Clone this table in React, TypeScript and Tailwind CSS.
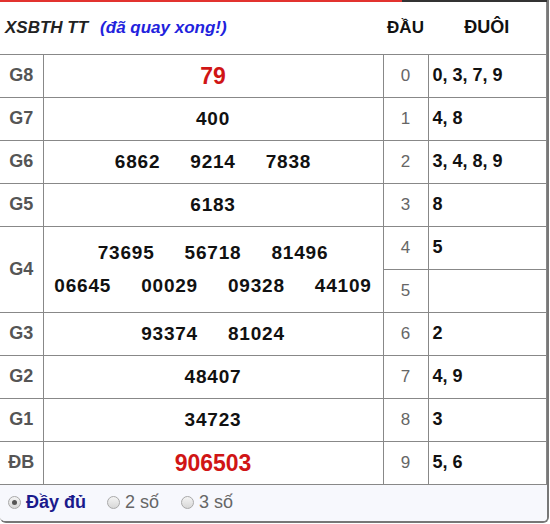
import React from "react"

const dau = ["0", "1", "2", "3", "4", "5", "6", "7", "8", "9"]
const duoi = ["0, 3, 7, 9", "4, 8", "3, 4, 8, 9", "8", "5", "", "2", "4, 9", "3", "5, 6"]

const Radio = ({ on }: { on?: boolean }) => (
  <span className="inline-flex w-[13px] h-[13px] rounded-full border border-[#a9a9a9] bg-gradient-to-b from-[#f4f4f4] to-[#d8d8d8] items-center justify-center mr-[5px]">
    {on && <span className="w-[5px] h-[5px] rounded-full bg-[#555]" />}
  </span>
)

const Nums = ({ items, red }: { items: string[]; red?: boolean }) => (
  <div
    className={`flex justify-center leading-[22px] ${
      red ? "text-[23px] text-[#d01515]" : "text-[19px] tracking-[0.8px] text-[#111] gap-[30px]"
    }`}
  >
    {items.map((n) => (
      <span key={n}>{n}</span>
    ))}
  </div>
)

export default function App() {
  const cellL = "border-b border-[#888] text-center text-[#555] font-bold text-[18px]"
  const cellM = "border-b border-l border-[#888] font-bold"
  const rows: { g: string; items: string[][]; red?: boolean }[] = [
    { g: "G8", items: [["79"]], red: true },
    { g: "G7", items: [["400"]] },
    { g: "G6", items: [["6862", "9214", "7838"]] },
    { g: "G5", items: [["6183"]] },
    { g: "G4", items: [["73695", "56718", "81496"], ["06645", "00029", "09328", "44109"]] },
    { g: "G3", items: [["93374", "81024"]] },
    { g: "G2", items: [["48407"]] },
    { g: "G1", items: [["34723"]] },
    { g: "ĐB", items: [["906503"]], red: true },
  ]

  let di = 0
  const body: React.ReactNode[] = []
  rows.forEach((r) => {
    const span = r.items.length
    for (let k = 0; k < span; k++) {
      const idx = di++
      body.push(
        <tr key={idx} className="h-[43px]">
          {k === 0 && (
            <>
              <td rowSpan={span} className={cellL}>{r.g}</td>
              <td rowSpan={span} className={cellM}>
                <div className="flex flex-col gap-[11px]">
                  {r.items.map((it, j) => (
                    <Nums key={j} items={it} red={r.red} />
                  ))}
                </div>
              </td>
            </>
          )}
          <td className="border-b border-l border-[#888] text-center text-[17px] text-[#666]">{dau[idx]}</td>
          <td className="border-b border-l border-r border-[#888] pl-[4px] text-[18px] font-bold text-[#111]">{duoi[idx]}</td>
        </tr>
      )
    }
  })

  return (
    <div className="w-[550px] h-[524px] bg-white font-['Liberation_Sans',Arial,sans-serif]">
      <div className="w-[549px] border-r-2 border-b-2 border-[#777] rounded-br-[6px] rounded-bl-[6px] overflow-hidden">
        <div className="flex h-[2px]">
          <div className="w-[402px] bg-[#e2322f]" />
          <div className="flex-1 bg-[#333]" />
        </div>
        <table className="w-[546px] table-fixed border-collapse">
          <colgroup>
            <col className="w-[43px]" />
            <col className="w-[340px]" />
            <col className="w-[45px]" />
            <col className="w-[118px]" />
          </colgroup>
          <thead>
            <tr className="h-[52px]">
              <th colSpan={2} className="border-b border-[#888] text-left pl-[5px] font-bold italic text-[17px] text-[#222] whitespace-nowrap">
                XSBTH TT<span className="ml-[12px] text-[#2222dd]">(đã quay xong!)</span>
              </th>
              <th className="border-b border-[#888] text-center font-bold text-[17px] text-[#111]">ĐẦU</th>
              <th className="border-b border-r border-[#888] text-center font-bold text-[18px] text-[#111]">ĐUÔI</th>
            </tr>
          </thead>
          <tbody>{body}</tbody>
        </table>
        <div className="h-[36px] bg-[#f7f8fd] flex items-center pl-[8px] text-[18px]">
          <label className="flex items-center mr-[21px]">
            <Radio on />
            <span className="font-bold text-[#1a1a8c]">Đầy đủ</span>
          </label>
          <label className="flex items-center mr-[22px] text-[#666]">
            <Radio />
            <span>2 số</span>
          </label>
          <label className="flex items-center text-[#666]">
            <Radio />
            <span>3 số</span>
          </label>
        </div>
      </div>
    </div>
  )
}
